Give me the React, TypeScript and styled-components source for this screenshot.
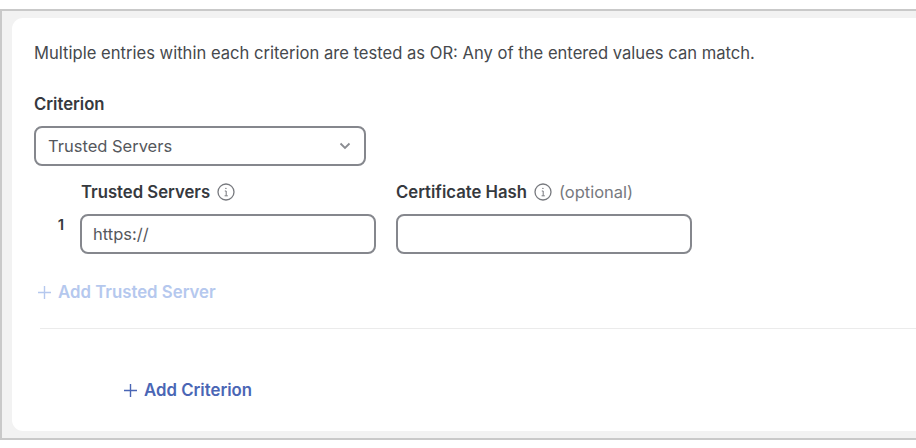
import React from "react";
import styled, { createGlobalStyle } from "styled-components";

const Global = createGlobalStyle`
  html, body { margin: 0; padding: 0; background: #fff; overflow: hidden; }
  body { font-family: Inter, "Liberation Sans", sans-serif; color: #3a3d42; }
`;

const Page = styled.div`
  width: 916px;
  height: 448px;
  padding-top: 9px;
  box-sizing: border-box;
`;

const Frame = styled.div`
  height: 431px;
  box-sizing: border-box;
  border: solid #c9c9c9;
  border-width: 2px 0 2px 2px;
  background: #f2f2f2;
  padding: 7px 0 7px 10px;
`;

const Card = styled.div`
  height: 100%;
  background: #fff;
  border-radius: 11px 0 0 11px;
  padding: 25px 0 0 22px;
  box-sizing: border-box;
  display: flex;
  flex-direction: column;
`;

const Intro = styled.p`
  margin: 0;
  font-size: 16.6px;
  line-height: 20px;
  color: #46494d;
`;

const Label = styled.span`
  font-size: 16.7px;
  line-height: 20px;
  font-weight: 600;
  color: #36393e;
`;

const CriterionLabel = styled(Label)`
  margin-top: 31px;
`;

const Select = styled.div`
  margin-top: 12px;
  width: 332px;
  height: 40px;
  box-sizing: border-box;
  border: 2px solid #85878d;
  border-radius: 8px;
  padding: 0 13px 0 12px;
  display: flex;
  align-items: center;
  justify-content: space-between;
  font-size: 16.5px;
  color: #55585d;
`;

const Fields = styled.div`
  margin-top: 16px;
  display: flex;
  align-items: flex-start;
`;

const RowNumber = styled.span`
  width: 46px;
  padding: 33px 16px 0 0;
  box-sizing: border-box;
  text-align: right;
  font-size: 15px;
  line-height: 20px;
  font-weight: 600;
  color: #36393e;
`;

const Field = styled.div`
  width: 296px;
  margin-right: 20px;
  display: flex;
  flex-direction: column;
`;

const FieldHead = styled.div<{ $inset?: boolean }>`
  height: 20px;
  padding-left: ${(p) => (p.$inset ? "1px" : "0")};
  display: flex;
  align-items: center;
  gap: 7px;
  white-space: nowrap;
`;

const Optional = styled.span`
  font-size: 16.5px;
  line-height: 20px;
  color: #77797e;
`;

const TextBox = styled.div`
  margin-top: 12px;
  height: 40px;
  box-sizing: border-box;
  border: 2px solid #85878d;
  border-radius: 8px;
  padding: 0 11px;
  display: flex;
  align-items: center;
  font-size: 16.5px;
  color: #55585d;
`;

const AddLink = styled.div<{ $muted?: boolean }>`
  display: flex;
  align-items: center;
  gap: 6px;
  font-size: 16.8px;
  line-height: 20px;
  font-weight: 600;
  color: ${(p) => (p.$muted ? "#b5c8ee" : "#4a66b5")};
`;

const AddServer = styled(AddLink)`
  margin: 28px 0 0 3px;
`;

const Divider = styled.hr`
  border: 0;
  border-top: 1px solid #ebebeb;
  margin: 26px 0 0 6px;
`;

const AddCriterion = styled(AddLink)`
  margin: 51px 0 0 89px;
`;

const Info = () => (
  <svg width="18" height="18" viewBox="0 0 18 18" fill="none" stroke="#77797e" strokeWidth="1.3">
    <circle cx="9" cy="9" r="8" />
    <path d="M7.8 8H9.2v4.6M7.6 12.8h3.2" strokeWidth="1" />
    <circle cx="8.9" cy="5.4" r="0.7" fill="#77797e" stroke="none" />
  </svg>
);

const Chevron = () => (
  <svg width="12" height="8" viewBox="0 0 12 8" fill="none" stroke="#8a8c91" strokeWidth="1.8">
    <path d="M1.5 1.5 6 6l4.5-4.5" />
  </svg>
);

const Plus = ({ color }: { color: string }) => (
  <svg width="15" height="15" viewBox="0 0 15 15" fill="none" stroke={color} strokeWidth="1.4">
    <path d="M7.5 1v13M1 7.5h13" />
  </svg>
);

export default function App() {
  return (
    <Page>
      <Global />
      <Frame>
        <Card>
          <Intro>Multiple entries within each criterion are tested as OR: Any of the entered values can match.</Intro>
          <CriterionLabel>Criterion</CriterionLabel>
          <Select>
            Trusted Servers
            <Chevron />
          </Select>
          <Fields>
            <RowNumber>1</RowNumber>
            <Field>
              <FieldHead $inset>
                <Label>Trusted Servers</Label>
                <Info />
              </FieldHead>
              <TextBox>https://</TextBox>
            </Field>
            <Field>
              <FieldHead>
                <Label>Certificate Hash</Label>
                <Info />
                <Optional>(optional)</Optional>
              </FieldHead>
              <TextBox />
            </Field>
          </Fields>
          <AddServer $muted>
            <Plus color="#b5c8ee" />
            Add Trusted Server
          </AddServer>
          <Divider />
          <AddCriterion>
            <Plus color="#4a66b5" />
            Add Criterion
          </AddCriterion>
        </Card>
      </Frame>
    </Page>
  );
}
